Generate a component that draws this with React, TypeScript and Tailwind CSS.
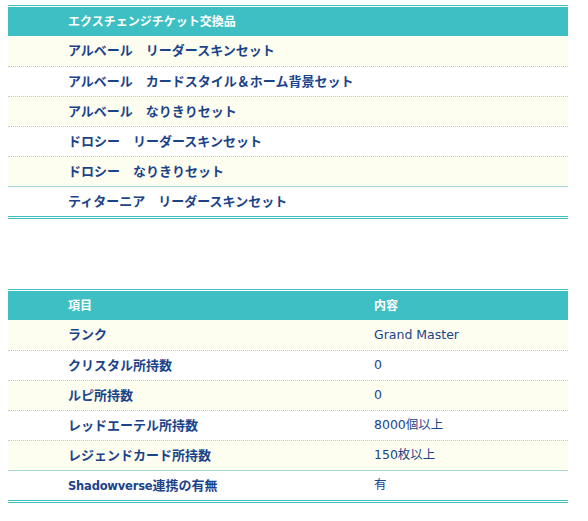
import React from "react";

const font = { fontFamily: '"DejaVu Sans", "Noto Sans CJK JP", sans-serif' };

const items = [
  "アルベール　リーダースキンセット",
  "アルベール　カードスタイル＆ホーム背景セット",
  "アルベール　なりきりセット",
  "ドロシー　リーダースキンセット",
  "ドロシー　なりきりセット",
  "ティターニア　リーダースキンセット",
];

const specs: [React.ReactNode, string][] = [
  ["ランク", "Grand Master"],
  ["クリスタル所持数", "0"],
  ["ルピ所持数", "0"],
  ["レッドエーテル所持数", "8000個以上"],
  ["レジェンドカード所持数", "150枚以上"],
  [
    <>
      <span className="text-[11.5px] tracking-[-0.2px]">Shadowverse</span>連携の有無
    </>,
    "有",
  ],
];

function rowBorder(i: number, n: number) {
  if (i === 0) return "";
  if (i === n - 1) return "border-t border-solid border-[#a9d6d6]";
  return "border-t border-dotted border-[#c8c8c8]";
}

export default function App() {
  return (
    <div className="w-[588px] h-[521px] bg-white pt-[5px] pl-[8px]" style={font}>
      <div className="w-[560px] border-y-[3px] border-double border-[#3dbfc4]">
        <div className="h-[28px] bg-[#3dbfc4] flex items-center pl-[60px] text-[12px] font-bold text-white">
          エクスチェンジチケット交換品
        </div>
        {items.map((t, i) => (
          <div
            key={i}
            className={`h-[30px] flex items-center pl-[60px] text-[13px] font-bold text-[#1b438a] ${
              i % 2 === 0 ? "bg-[#fefef0]" : "bg-white"
            } ${rowBorder(i, items.length)}`}
          >
            {t}
          </div>
        ))}
      </div>

      <div className="mt-[70px] w-[560px] border-y-[3px] border-double border-[#3dbfc4]">
        <div className="h-[28px] bg-[#3dbfc4] grid grid-cols-[366px_1fr] items-center text-[12px] font-bold text-white">
          <div className="pl-[60px]">項目</div>
          <div>内容</div>
        </div>
        {specs.map(([k, v], i) => (
          <div
            key={i}
            className={`h-[30px] grid grid-cols-[366px_1fr] items-center text-[13px] text-[#1b438a] ${
              i % 2 === 0 ? "bg-[#fefef0]" : "bg-white"
            } ${rowBorder(i, specs.length)}`}
          >
            <div className="pl-[60px] font-bold">{k}</div>
            <div className="text-[12.5px]">{v}</div>
          </div>
        ))}
      </div>
    </div>
  );
}
